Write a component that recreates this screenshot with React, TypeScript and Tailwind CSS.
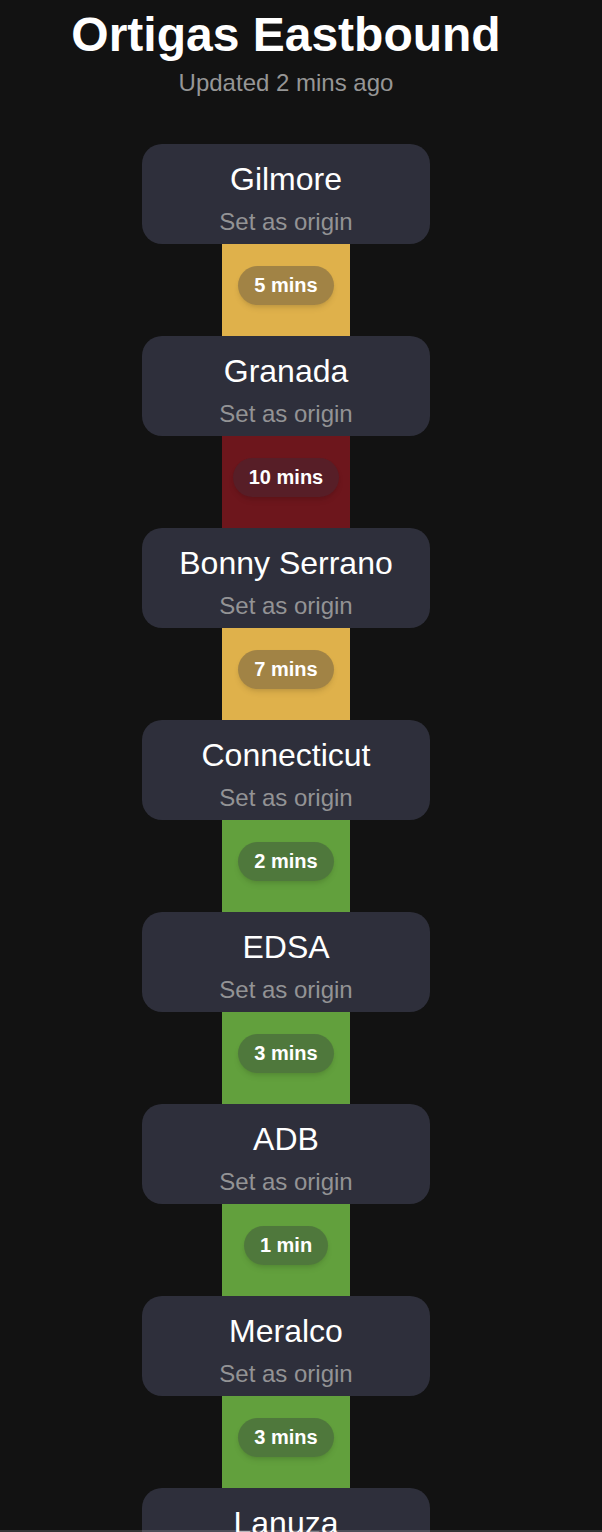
import React from 'react';

type Leg = { mins: string; tone: 'yellow' | 'red' | 'green' };

const stations: { name: string; next?: Leg }[] = [
  { name: 'Gilmore', next: { mins: '5 mins', tone: 'yellow' } },
  { name: 'Granada', next: { mins: '10 mins', tone: 'red' } },
  { name: 'Bonny Serrano', next: { mins: '7 mins', tone: 'yellow' } },
  { name: 'Connecticut', next: { mins: '2 mins', tone: 'green' } },
  { name: 'EDSA', next: { mins: '3 mins', tone: 'green' } },
  { name: 'ADB', next: { mins: '1 min', tone: 'green' } },
  { name: 'Meralco', next: { mins: '3 mins', tone: 'green' } },
  { name: 'Lanuza', next: { mins: '4 mins', tone: 'green' } },
  { name: 'Rosario' },
];

const toneBg: Record<Leg['tone'], string> = {
  yellow: 'bg-[#dfb14b]',
  red: 'bg-[#6d161c]',
  green: 'bg-[#62a03d]',
};

function StationCard({ name }: { name: string }) {
  return (
    <button className="flex w-[288px] flex-col items-center rounded-[20px] bg-[#2e2f3b] pt-4 pb-2">
      <span className="text-[32px] leading-[38px] text-white">{name}</span>
      <span className="mt-[10px] text-2xl leading-[28px] text-[#939395]">Set as origin</span>
    </button>
  );
}

function LegBar({ leg }: { leg: Leg }) {
  return (
    <div className={`flex h-[92px] w-32 justify-center pt-[22px] ${toneBg[leg.tone]}`}>
      <span className="h-[39px] rounded-full bg-[#2e2f3b]/35 px-4 py-2 text-xl leading-[23px] font-semibold text-white shadow-md">
        {leg.mins}
      </span>
    </div>
  );
}

export default function App() {
  return (
    <div className="min-h-screen bg-[#121212] font-['Liberation_Sans',Arial,sans-serif]">
      <div className="flex w-[572px] flex-col items-center pt-[7px] pb-10">
        <h1 className="text-5xl leading-[56px] font-bold text-white">Ortigas Eastbound</h1>
        <p className="mt-[6px] text-2xl leading-[28px] text-[#969696]">Updated 2 mins ago</p>

        <div className="mt-[47px] flex flex-col items-center">
          {stations.map((s) => (
            <React.Fragment key={s.name}>
              <StationCard name={s.name} />
              {s.next && <LegBar leg={s.next} />}
            </React.Fragment>
          ))}
        </div>
      </div>
      <div className="fixed right-0 bottom-0 left-0 h-[2px] bg-white/15" />
    </div>
  );
}
